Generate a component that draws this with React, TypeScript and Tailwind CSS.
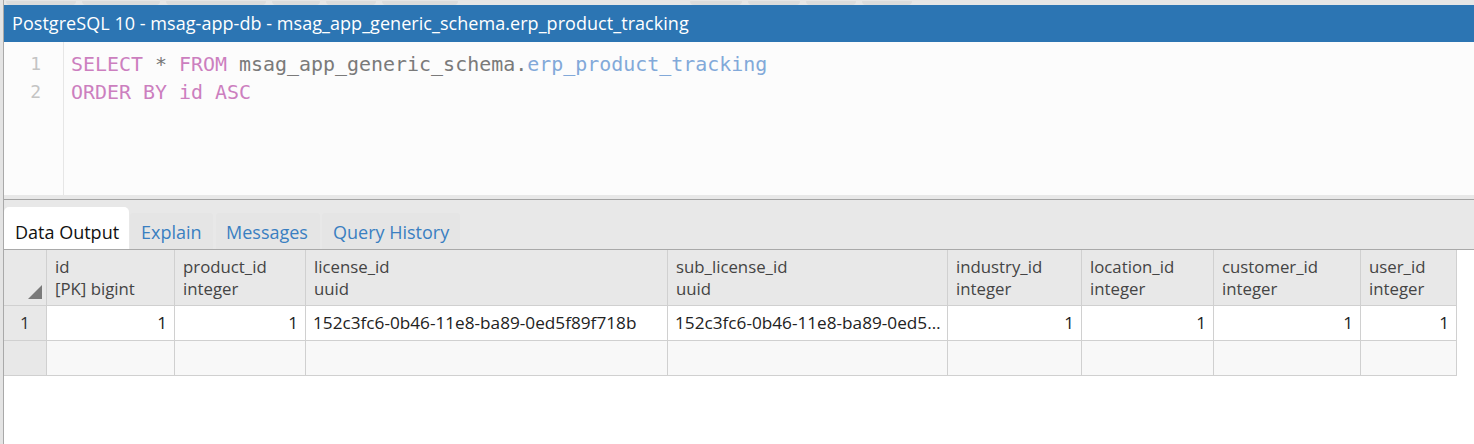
import React from "react";

const cols = [
  { w: 43, name: "", type: "" },
  { w: 128, name: "id", type: "[PK] bigint" },
  { w: 131, name: "product_id", type: "integer" },
  { w: 362, name: "license_id", type: "uuid" },
  { w: 280, name: "sub_license_id", type: "uuid" },
  { w: 134, name: "industry_id", type: "integer" },
  { w: 132, name: "location_id", type: "integer" },
  { w: 147, name: "customer_id", type: "integer" },
  { w: 96, name: "user_id", type: "integer" },
];

const row1: { v: string; right: boolean }[] = [
  { v: "1", right: true },
  { v: "1", right: true },
  { v: "152c3fc6-0b46-11e8-ba89-0ed5f89f718b", right: false },
  { v: "152c3fc6-0b46-11e8-ba89-0ed5…", right: false },
  { v: "1", right: true },
  { v: "1", right: true },
  { v: "1", right: true },
  { v: "1", right: true },
];

export default function App() {
  const font = { fontFamily: '"Open Sans", "Noto Sans", sans-serif' };
  return (
    <div className="w-[1474px] h-[444px] overflow-hidden bg-white flex" style={font}>
      <div className="w-[4px] bg-[#e4e4e4] border-r border-[#a9a9a9] shrink-0" />
      <div className="flex-1 flex flex-col min-w-0">
        {/* toolbar remnant */}
        <div className="h-[5px] bg-[#e6e6e6] flex items-end gap-[6px] pl-[2px] overflow-hidden">
          <div className="w-[70px] h-[4px] bg-[#dcdcdc] rounded-b-sm" />
          <div className="w-[78px] h-[4px] bg-[#dcdcdc] rounded-b-sm" />
          <div className="w-[100px] h-[4px] bg-[#dcdcdc] rounded-b-sm" />
          <div className="w-[48px] h-[4px] bg-[#dcdcdc] rounded-b-sm" />
          <div className="w-[50px] h-[4px] bg-[#dcdcdc] rounded-b-sm" />
          <div className="w-[76px] h-[4px] bg-[#dcdcdc] rounded-b-sm" />
          <div className="w-[220px]" />
          <div className="w-[52px] h-[4px] bg-[#dcdcdc] rounded-b-sm" />
          <div className="w-[52px] h-[4px] bg-[#dcdcdc] rounded-b-sm" />
          <div className="w-[50px] h-[4px] bg-[#dcdcdc] rounded-b-sm" />
          <div className="w-[50px] h-[4px] bg-[#dcdcdc] rounded-b-sm" />
        </div>
        {/* title */}
        <div className="h-[37px] bg-[#2c75b3] text-white text-[18px] flex items-center pl-[8px] tracking-[0.05px]">
          PostgreSQL 10 - msag-app-db - msag_app_generic_schema.erp_product_tracking
        </div>
        {/* editor */}
        <div className="h-[153px] bg-[#fcfcfc] flex">
          <div className="w-[60px] border-r border-[#e6e6e6] pt-[8px] text-[#c4c4c4] text-right pr-[22px] leading-[28px]" style={{ fontFamily: '"DejaVu Sans Mono", monospace', fontSize: "18px" }}>
            <div>1</div>
            <div>2</div>
          </div>
          <div className="pl-[7px] pt-[8px] leading-[28px]" style={{ fontFamily: '"DejaVu Sans Mono", monospace', fontSize: "19.95px" }}>
            <div className="whitespace-pre">
              <span className="text-[#cc7fbf]">SELECT</span>
              <span className="text-[#777]"> * </span>
              <span className="text-[#cc7fbf]">FROM</span>
              <span className="text-[#7a7a7a]"> msag_app_generic_schema.</span>
              <span className="text-[#82a9d9]">erp_product_tracking</span>
            </div>
            <div className="whitespace-pre">
              <span className="text-[#cc7fbf]">ORDER BY id ASC</span>
            </div>
          </div>
        </div>
        {/* splitter */}
        <div className="h-[4px] bg-[#e8e8e8]" />
        {/* tab bar */}
        <div className="h-[51px] bg-[#e8e8e8] border-t border-[#a3a3a3] border-b border-b-[#a9a9a9] flex items-end text-[18px]">
          <div className="w-[125px] h-[42px] bg-white rounded-t-[5px] text-[#111] flex items-end pb-[3px] pl-[11px]">Data Output</div>
          <div className="ml-[1px] w-[83px] h-[36px] bg-[#e5e5e5] rounded-t-[3px] text-[#3a7fc1] flex items-end pb-[3px] pl-[11px]">Explain</div>
          <div className="ml-[3px] w-[104px] h-[36px] bg-[#e5e5e5] rounded-t-[3px] text-[#3a7fc1] flex items-end pb-[3px] pl-[10px]">Messages</div>
          <div className="ml-[2px] w-[138px] h-[36px] bg-[#e5e5e5] rounded-t-[3px] text-[#3a7fc1] flex items-end pb-[3px] pl-[11px]">Query History</div>
        </div>
        {/* grid */}
        <div className="flex flex-col">
          <div className="flex h-[56px] text-[16.8px]">
            {cols.map((c, i) => (
              <div
                key={i}
                className="bg-[#e8e8e8] border-r border-b border-[#d0d0d0] relative flex flex-col justify-start pt-[6px] pl-[8px] leading-[22px] text-[#444]"
                style={{ width: c.w }}
              >
                {i === 0 ? (
                  <svg className="absolute right-[4px] bottom-[6px]" width="14" height="14" viewBox="0 0 14 14">
                    <polygon points="14,0 14,14 0,14" fill="#7a7a7a" />
                  </svg>
                ) : (
                  <>
                    <div>{c.name}</div>
                    <div>{c.type}</div>
                  </>
                )}
              </div>
            ))}
          </div>
          <div className="flex h-[35px] text-[17.2px]">
            <div className="bg-[#e8e8e8] border-r border-b border-[#d0d0d0] flex items-center justify-center text-[#333]" style={{ width: cols[0].w }}>
              1
            </div>
            {row1.map((c, i) => (
              <div
                key={i}
                className={`bg-white border-r border-b border-[#d0d0d0] flex items-center px-[7px] text-[#222] whitespace-nowrap overflow-hidden ${c.right ? "justify-end" : "justify-start"}`}
                style={{ width: cols[i + 1].w }}
              >
                {c.v}
              </div>
            ))}
          </div>
          <div className="flex h-[35px]">
            {cols.map((c, i) => (
              <div
                key={i}
                className={`border-r border-b border-[#d0d0d0] ${i === 0 ? "bg-[#e8e8e8]" : "bg-[#f8f8f8]"}`}
                style={{ width: c.w }}
              />
            ))}
          </div>
        </div>
      </div>
    </div>
  );
}
